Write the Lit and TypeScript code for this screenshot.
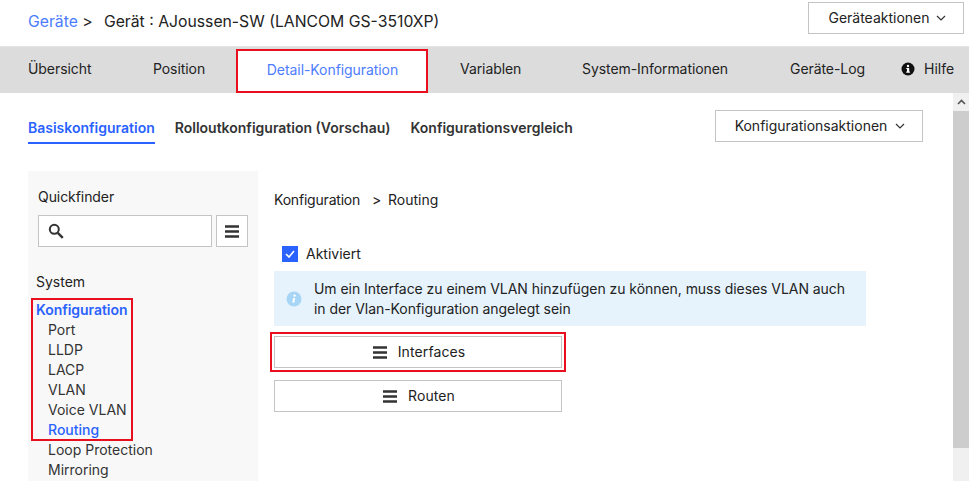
import { LitElement, html, css } from "lit";
import { customElement } from "lit/decorators.js";

const burger = (w: number) => html`<svg class="burger" width=${w} height="13" viewBox="0 0 14 13"><path d="M0 1.5h14M0 6.5h14M0 11.5h14" stroke="#333" stroke-width="2.4" fill="none"/></svg>`;
const chevron = html`<svg class="chev" width="10" height="6" viewBox="0 0 10 6"><path d="M1 1l4 4 4-4" stroke="#333" stroke-width="1.2" fill="none"/></svg>`;

@customElement("app-root")
export class AppRoot extends LitElement {
  static styles = css`
    :host { display: block; width: 969px; height: 481px; overflow: hidden; background: #fff; font: 14px/20px Inter, "Liberation Sans", sans-serif; color: #222; }
    * { box-sizing: border-box; }
    .top { height: 46px; display: flex; justify-content: space-between; padding: 2px 5px 0 28px; }
    .crumb { font-size: 15.75px; line-height: 40px; white-space: pre; display: flex; }
    .crumb a { color: #4d7cff; }
    .crumb .sep { width: 26px; }
    .btn { height: 32px; border: 1px solid #c4c4c4; background: #fff; display: flex; align-items: center; justify-content: center; gap: 8px; color: #222; }
    .dev { width: 156px; padding: 0 0 1px 2px; gap: 6px; }
    .nav { height: 47px; background: #dcdcdc; border-top: 1px solid #e4e4e4; display: flex; align-items: center; padding: 0 0 2px 28px; letter-spacing: -0.07px; }
    .t { display: block; }
    .active { width: 192px; height: 44px; align-self: flex-end; background: #fff; border: 2px solid #e8101f; color: #4d7cff; display: flex; align-items: center; justify-content: center; margin: 0 32px -2px 31px; padding: 0 0 3px 1px; }
    .help { display: flex; align-items: center; gap: 9px; letter-spacing: 0; }
    .body { display: flex; height: 388px; }
    .page { flex: 1; padding: 17px 30px 0 28px; min-width: 0; }
    .sb { width: 16px; background: #f0f0f0; display: flex; flex-direction: column; }
    .sb .up { height: 18px; display: flex; align-items: center; justify-content: center; }
    .sb .thumb { height: 337px; background: #cdcdcd; }
    .subs { display: flex; justify-content: space-between; align-items: flex-start; height: 61px; }
    .tabs { display: flex; gap: 20px; font-weight: 600; padding-top: 8px; color: #333; }
    .tabs .cur { color: #2a62ff; border-bottom: 2px solid #2a62ff; height: 26px; }
    .cfg { width: 208px; padding-left: 2px; }
    .cols { display: flex; }
    .side { width: 230px; height: 310px; background: #f8f8f8; padding: 16px 10px 0 8px; flex: none; }
    .qf { padding-left: 2px; letter-spacing: -0.07px; }
    .search { display: flex; gap: 4px; margin-top: 8px; margin-left: 2px; }
    .input { width: 174px; height: 32px; border: 1px solid #c4c4c4; background: #fff; display: flex; align-items: center; padding-left: 9px; }
    .sq { width: 32px; height: 32px; border: 1px solid #c4c4c4; background: #fff; display: flex; align-items: center; justify-content: center; }
    .sys { margin-top: 25px; }
    .group { margin: 6px 0 -1px -5px; padding: 1px 0 0 5px; width: 102px; height: 143px; outline: 2px solid #e8101f; outline-offset: -2px; }
    .k { color: #2a62ff; font-weight: 600; line-height: 20px; margin-top: 1px; letter-spacing: -0.05px; }
    .it { padding-left: 12px; color: #333; white-space: nowrap; }
    .it.on { color: #2a62ff; font-weight: 500; }
    .main { margin-left: 16px; width: 592px; padding-top: 19px; }
    .bc { display: flex; }
    .bc .a { width: 98px; letter-spacing: -0.2px; }
    .bc .b { width: 16px; }
    .check { display: flex; align-items: center; margin: 34px 0 0 8px; gap: 8px; height: 20px; }
    .box { width: 16px; height: 16px; background: #2a62ff; display: flex; align-items: center; justify-content: center; }
    .info { margin-top: 7px; height: 55px; background: #e6f3fc; display: flex; align-items: center; padding: 0 8px 0 12px; gap: 12px; letter-spacing: -0.05px; }
    .wide { width: 288px; gap: 11px; padding: 0 0 0 2px; letter-spacing: 0.1px; }
    .wide.red { margin-top: 10px; outline: 2px solid #e8101f; outline-offset: 2px; }
    .wide.plain { margin-top: 12px; }
    .chev, .burger { flex: none; display: block; }
    .w125 { width: 125px; } .w52 { width: 52px; } .w122 { width: 122px; } .w208 { width: 208px; } .w111 { width: 111px; }
    .infoicon { flex: none; }
  `;

  render() {
    return html`
      <div class="top">
        <div class="crumb"><a>Geräte</a><span class="sep"> &gt; </span><span>Gerät : AJoussen-SW (LANCOM GS-3510XP)</span></div>
        <div class="btn dev">Geräteaktionen ${chevron}</div>
      </div>
      <div class="nav">
        <span class="t w125">Übersicht</span>
        <span class="t w52">Position</span>
        <span class="t active">Detail-Konfiguration</span>
        <span class="t w122">Variablen</span>
        <span class="t w208">System-Informationen</span>
        <span class="t w111">Geräte-Log</span>
        <span class="help">
          <svg width="14" height="14" viewBox="0 0 14 14"><circle cx="7" cy="7" r="6.5" fill="#111"/><rect x="6" y="6" width="2.2" height="4.2" fill="#fff"/><rect x="5.2" y="9.6" width="3.8" height="1.1" fill="#fff"/><rect x="5.2" y="6" width="2" height="1" fill="#fff"/><circle cx="7" cy="4" r="1.2" fill="#fff"/></svg>
          Hilfe
        </span>
      </div>
      <div class="body">
        <div class="page">
          <div class="subs">
            <div class="tabs">
              <span class="cur">Basiskonfiguration</span>
              <span>Rolloutkonfiguration (Vorschau)</span>
              <span>Konfigurationsvergleich</span>
            </div>
            <div class="btn cfg">Konfigurationsaktionen ${chevron}</div>
          </div>
          <div class="cols">
            <aside class="side">
              <div class="qf">Quickfinder</div>
              <div class="search">
                <div class="input">
                  <svg width="16" height="16" viewBox="0 0 16 16"><circle cx="6.3" cy="6.3" r="4.5" stroke="#333" stroke-width="2" fill="none"/><path d="M9.8 9.8l5 5" stroke="#333" stroke-width="2.4" fill="none"/></svg>
                </div>
                <div class="sq">${burger(14)}</div>
              </div>
              <div class="sys">System</div>
              <div class="group">
                <div class="k">Konfiguration</div>
                <div class="it">Port</div>
                <div class="it">LLDP</div>
                <div class="it">LACP</div>
                <div class="it">VLAN</div>
                <div class="it">Voice VLAN</div>
                <div class="it on">Routing</div>
              </div>
              <div class="it">Loop Protection</div>
              <div class="it">Mirroring</div>
            </aside>
            <div class="main">
              <div class="bc"><span class="a">Konfiguration</span><span class="b">&gt;</span><span>Routing</span></div>
              <div class="check">
                <span class="box"><svg width="10" height="8" viewBox="0 0 10 8"><path d="M1 4l3 3 5-6" stroke="#fff" stroke-width="1.6" fill="none"/></svg></span>
                Aktiviert
              </div>
              <div class="info">
                <svg class="infoicon" width="16" height="16" viewBox="0 0 16 16"><circle cx="8" cy="8" r="7.5" fill="#a6d5f5"/><circle cx="8.6" cy="4.6" r="1.2" fill="#fff"/><path d="M8.2 7l-.9 4.6" stroke="#fff" stroke-width="2" fill="none"/></svg>
                <div>Um ein Interface zu einem VLAN hinzufügen zu können, muss dieses VLAN auch in der Vlan-Konfiguration angelegt sein</div>
              </div>
              <div class="btn wide red">${burger(14)} Interfaces</div>
              <div class="btn wide plain">${burger(14)} Routen</div>
            </div>
          </div>
        </div>
        <div class="sb">
          <div class="up"><svg width="9" height="6" viewBox="0 0 9 6"><path d="M1 5l3.5-3.5L8 5" stroke="#555" stroke-width="1.6" fill="none"/></svg></div>
          <div class="thumb"></div>
        </div>
      </div>
    `;
  }
}
